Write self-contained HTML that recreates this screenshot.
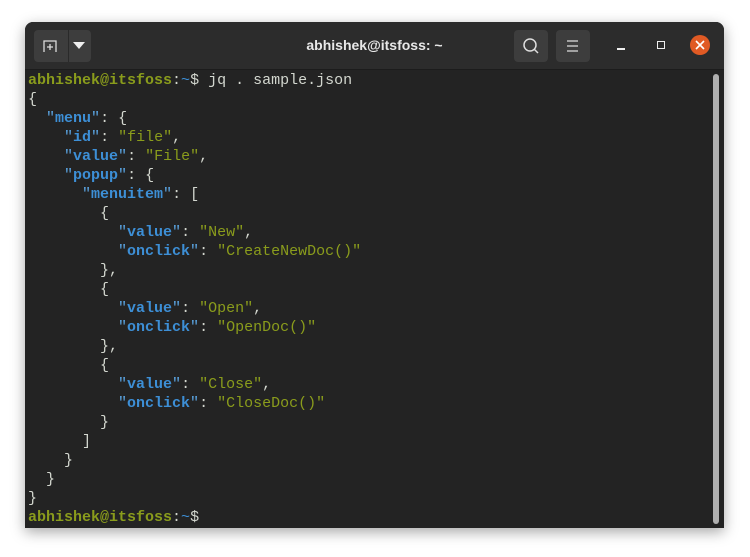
<!DOCTYPE html>
<html><head><style>
body{margin:0;width:750px;height:557px;background:#fff;position:relative;overflow:hidden;font-family:"Liberation Sans",sans-serif}
.win{position:absolute;left:25px;top:22px;width:699px;height:506px;background:#232323;border-radius:8px 8px 0 0;box-shadow:0 4px 14px rgba(0,0,0,.35);overflow:hidden}
.hdr{position:absolute;left:0;top:0;width:699px;height:47px;background:#2c2c2c;border-bottom:1px solid #1c1c1c}
.btn{position:absolute;background:#3d3d3d;border-radius:4px}
.title{position:absolute;left:0;width:699px;top:15px;text-align:center;color:#e8e8e8;font-weight:bold;font-size:14px}
pre{position:absolute;left:3px;top:49px;margin:0;font-family:"Liberation Mono",monospace;font-size:15px;line-height:19px;color:#d3d7cf}
.u{color:#8a9c1c;font-weight:bold}.t{color:#3d8fd6}
.k{color:#3d8fd6;font-weight:bold}.q{color:#5aa3e0}.s{color:#8a9c1c}
.sb{position:absolute;right:5px;top:52px;width:6px;height:450px;background:#b0b0b0;border-radius:3px}
</style></head><body>
<div class="win">
<div class="hdr">
<div class="btn" style="left:9px;top:8px;width:57px;height:32px"></div>
<div style="position:absolute;left:43px;top:8px;width:1px;height:32px;background:#2a2a2a"></div>
<svg style="position:absolute;left:17px;top:16px" width="16" height="16" viewBox="0 0 16 16" fill="none" stroke="#ddd" stroke-width="1.3"><path d="M2 14V3h12v11M8 6v6M5 9h6"/></svg>
<svg style="position:absolute;left:48px;top:20px" width="12" height="8"><path d="M0 0h12L6 7z" fill="#eee"/></svg>
<div class="title">abhishek@itsfoss: ~</div>
<div class="btn" style="left:489px;top:8px;width:34px;height:32px"></div>
<svg style="position:absolute;left:497px;top:15px" width="18" height="18" fill="none" stroke="#ddd" stroke-width="1.5"><circle cx="8" cy="8" r="6"/><path d="M12.5 12.5L16 16"/></svg>
<div class="btn" style="left:531px;top:8px;width:34px;height:32px"></div>
<svg style="position:absolute;left:541px;top:17px" width="14" height="14" stroke="#ddd" stroke-width="1.3"><path d="M1 2h11M1 7h11M1 12h11"/></svg>
<div style="position:absolute;left:592px;top:26px;width:8px;height:1.5px;background:#eee"></div>
<div style="position:absolute;left:632px;top:19px;width:6px;height:6px;border:1.5px solid #eee"></div>
<div style="position:absolute;left:665px;top:13px;width:20px;height:20px;border-radius:50%;background:#e05a24"></div>
<svg style="position:absolute;left:670px;top:18px" width="10" height="10" stroke="#fff" stroke-width="1.6"><path d="M1 1l8 8M9 1l-8 8"/></svg>
</div>
<pre><span class="u">abhishek@itsfoss</span>:<span class="t">~</span>$ jq . sample.json
{
  <span class="q">"</span><span class="k">menu</span><span class="q">"</span>: {
    <span class="q">"</span><span class="k">id</span><span class="q">"</span>: <span class="s">"file"</span>,
    <span class="q">"</span><span class="k">value</span><span class="q">"</span>: <span class="s">"File"</span>,
    <span class="q">"</span><span class="k">popup</span><span class="q">"</span>: {
      <span class="q">"</span><span class="k">menuitem</span><span class="q">"</span>: [
        {
          <span class="q">"</span><span class="k">value</span><span class="q">"</span>: <span class="s">"New"</span>,
          <span class="q">"</span><span class="k">onclick</span><span class="q">"</span>: <span class="s">"CreateNewDoc()"</span>
        },
        {
          <span class="q">"</span><span class="k">value</span><span class="q">"</span>: <span class="s">"Open"</span>,
          <span class="q">"</span><span class="k">onclick</span><span class="q">"</span>: <span class="s">"OpenDoc()"</span>
        },
        {
          <span class="q">"</span><span class="k">value</span><span class="q">"</span>: <span class="s">"Close"</span>,
          <span class="q">"</span><span class="k">onclick</span><span class="q">"</span>: <span class="s">"CloseDoc()"</span>
        }
      ]
    }
  }
}
<span class="u">abhishek@itsfoss</span>:<span class="t">~</span>$</pre>
<div class="sb"></div>
</div>
</body></html>
